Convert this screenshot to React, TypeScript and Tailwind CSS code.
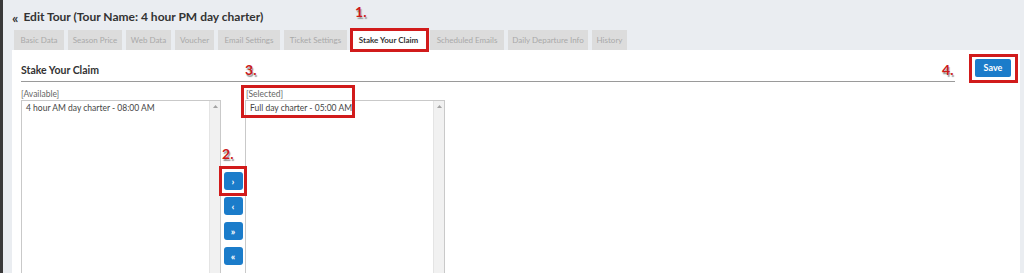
import { FC } from 'react';

type Tab = { label: string; width: number; active?: boolean };

const tabs: Tab[] = [
  { label: 'Basic Data', width: 50 },
  { label: 'Season Price', width: 54 },
  { label: 'Web Data', width: 45 },
  { label: 'Voucher', width: 39 },
  { label: 'Email Settings', width: 62 },
  { label: 'Ticket Settings', width: 63 },
  { label: 'Stake Your Claim', width: 75, active: true },
  { label: 'Scheduled Emails', width: 74 },
  { label: 'Daily Departure Info', width: 80 },
  { label: 'History', width: 35 },
];

const Marker: FC<{ n: number; className: string }> = ({ n, className }) => (
  <span
    className={`absolute text-[14px] leading-[14px] font-bold text-[#cc1a1a] [text-shadow:1px_2px_1px_#9a9a9a] ${className}`}
  >
    {n}.
  </span>
);

// red highlight frame drawn over the screenshot
const Frame: FC<{ className: string }> = ({ className }) => (
  <div className={`absolute border-[3px] border-[#d11b1b] ${className}`} />
);

const ListBox: FC<{ items: string[] }> = ({ items }) => (
  <div className="flex h-[190px] w-[200px] border border-[#c9c9c9] bg-white">
    <div className="flex-1 pl-[4px] pt-[2px]">
      {items.map((item) => (
        <div key={item} className="text-[8.5px] leading-[11px] text-[#444]">
          {item}
        </div>
      ))}
    </div>
    <div className="flex w-[11px] flex-col items-center border-l border-[#e4e4e4] bg-[#f1f1f1] pt-[4px]">
      <svg width="5" height="3" viewBox="0 0 5 3">
        <path d="M0 3 L2.5 0 L5 3 Z" fill="#a3a3a3" />
      </svg>
    </div>
  </div>
);

const MoveButton: FC<{ glyph: string }> = ({ glyph }) => (
  <button className="flex h-[18px] w-[19px] items-center justify-center rounded-[3px] bg-[#1b7cca] text-[10px] font-bold leading-none text-white">
    {glyph}
  </button>
);

const App: FC = () => {
  return (
    <div className="relative flex h-[273px] w-[1024px] overflow-hidden bg-[#eaedf1] font-['Lato','Liberation_Sans',sans-serif]">
      <div className="w-[3px] shrink-0 bg-[#3a3a3a]" />

      <div className="flex min-h-0 flex-1 flex-col pl-[9px] pr-[4px]">
        <div className="flex h-[30px] shrink-0 items-center gap-[5px] pt-[4px] text-[12px] font-bold text-[#333]">
          <span className="text-[14px]">«</span>
          <span>Edit Tour (Tour Name: 4 hour PM day charter)</span>
        </div>

        <div className="flex h-[20px] shrink-0 gap-[4px] pl-[2px]">
          {tabs.map((tab) => (
            <div
              key={tab.label}
              style={{ width: tab.width }}
              className={`flex items-center justify-center whitespace-nowrap text-[8px] ${
                tab.active ? 'bg-white font-bold text-[#333]' : 'bg-[#dcdcdc] text-[#a9a9a9]'
              }`}
            >
              {tab.label}
            </div>
          ))}
        </div>

        <div className="min-h-0 flex-1 overflow-hidden bg-white px-[9px] pt-[9px]">
          <div className="flex items-start">
            <div className="flex h-[23px] flex-1 items-end border-b border-[#9a9a9a] pb-[2px] text-[10.5px] font-bold text-[#333]">
              Stake Your Claim
            </div>
            <button className="ml-[20px] h-[18px] w-[36px] rounded-[2px] bg-[#1b7cca] text-[9px] font-bold text-white">
              Save
            </button>
          </div>

          <div className="mt-[7px] flex">
            <div className="flex flex-col">
              <div className="h-[11px] text-[8.5px] leading-[11px] text-[#666]">[Available]</div>
              <ListBox items={['4 hour AM day charter - 08:00 AM']} />
            </div>

            <div className="flex w-[24px] flex-col items-center gap-[7px] pt-[83px]">
              <MoveButton glyph="›" />
              <MoveButton glyph="‹" />
              <MoveButton glyph="»" />
              <MoveButton glyph="«" />
            </div>

            <div className="flex flex-col">
              <div className="h-[11px] pl-[1px] text-[8.5px] leading-[11px] text-[#666]">[Selected]</div>
              <ListBox items={['Full day charter - 05:00 AM']} />
            </div>
          </div>
        </div>
      </div>

      <Frame className="left-[350px] top-[28px] h-[24px] w-[79px] border-2" />
      <Frame className="left-[241px] top-[85px] h-[33px] w-[114px]" />
      <Frame className="left-[219px] top-[166px] h-[30px] w-[28px]" />
      <Frame className="left-[969px] top-[54px] h-[29px] w-[49px]" />

      <Marker n={1} className="left-[355px] top-[5px]" />
      <Marker n={2} className="left-[222px] top-[147px]" />
      <Marker n={3} className="left-[245px] top-[63px]" />
      <Marker n={4} className="left-[942px] top-[63px]" />
    </div>
  );
};

export default App;
